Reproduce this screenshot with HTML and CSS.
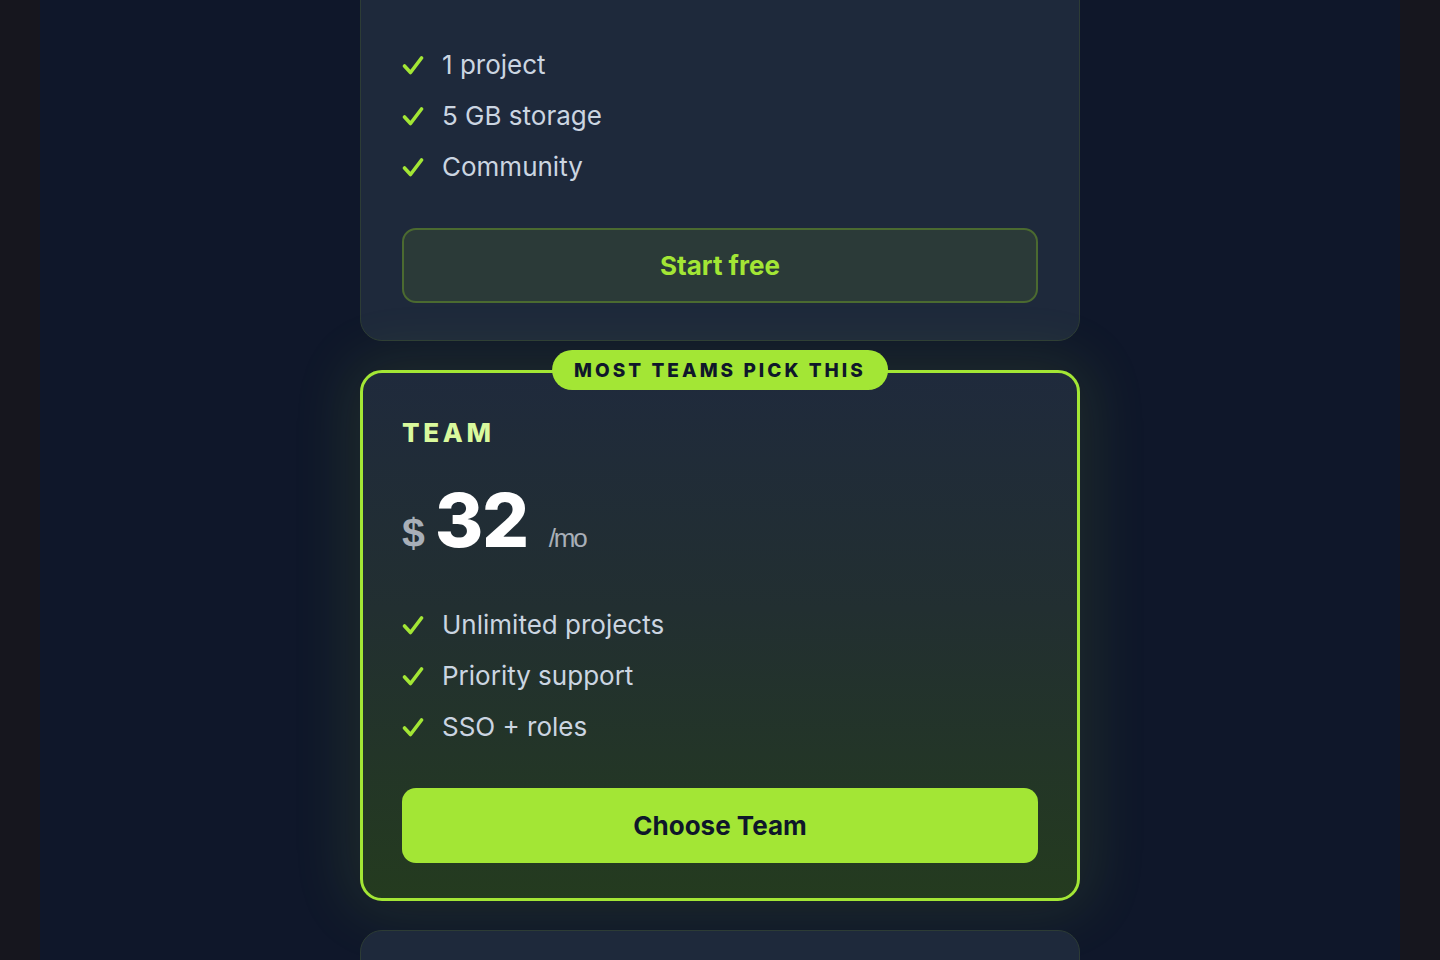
FILE: index.html
```html
<!DOCTYPE html>
<html lang="en">
<head>
<meta charset="utf-8">
<title>Pricing</title>
<link rel="stylesheet" href="styles.css">
</head>
<body>
<main class="page">
  <section class="stack">
    <article class="card card-top">
      <ul class="features">
        <li><svg class="check" viewBox="0 0 22 20"><path d="M2.5 11 L8.5 17.5 L19.5 3"/></svg>1 project</li>
        <li><svg class="check" viewBox="0 0 22 20"><path d="M2.5 11 L8.5 17.5 L19.5 3"/></svg>5 GB storage</li>
        <li><svg class="check" viewBox="0 0 22 20"><path d="M2.5 11 L8.5 17.5 L19.5 3"/></svg>Community</li>
      </ul>
      <button class="btn btn-ghost">Start free</button>
    </article>

    <article class="card card-featured">
      <span class="badge">MOST TEAMS PICK THIS</span>
      <h3 class="tier">TEAM</h3>
      <div class="price"><span class="cur">$</span><span class="amt">32</span><span class="per">/mo</span></div>
      <ul class="features">
        <li><svg class="check" viewBox="0 0 22 20"><path d="M2.5 11 L8.5 17.5 L19.5 3"/></svg>Unlimited projects</li>
        <li><svg class="check" viewBox="0 0 22 20"><path d="M2.5 11 L8.5 17.5 L19.5 3"/></svg>Priority support</li>
        <li><svg class="check" viewBox="0 0 22 20"><path d="M2.5 11 L8.5 17.5 L19.5 3"/></svg>SSO + roles</li>
      </ul>
      <button class="btn btn-solid">Choose Team</button>
    </article>

    <article class="card card-next"></article>
  </section>
</main>
</body>
</html>
```

FILE: styles.css
```css
* { box-sizing: border-box; }

html, body {
  margin: 0;
  height: 100%;
}

body {
  background: #16161e;
  font-family: Inter, "Noto Sans", sans-serif;
  overflow: hidden;
}

.page {
  margin: 0 40px;
  height: 960px;
  overflow: hidden;
  background: #0f172a;
  display: flex;
  justify-content: center;
}

.stack {
  width: 720px;
  margin-top: -60px;
  display: flex;
  flex-direction: column;
  gap: 29px;
}

.card {
  position: relative;
  flex: none;
  background: #1e293b;
  border: 1px solid #2d3c35;
  border-radius: 22px;
  padding: 41px 41px 37px;
}

.card-top {
  padding-top: 108px;
}

.card-next {
  height: 120px;
}

.card-featured {
  border: 3px solid #a3e635;
  padding: 42px 39px 35px;
  background: linear-gradient(180deg, #1f2a3c 0%, #222f31 45%, #243b1f 100%);
  box-shadow: 0 0 60px 12px rgba(163, 230, 53, 0.10);
}

.badge {
  position: absolute;
  top: -23px;
  left: 50%;
  transform: translateX(-50%);
  height: 40px;
  padding: 0 22px;
  display: flex;
  align-items: center;
  background: #a3e635;
  color: #0f172a;
  border-radius: 20px;
  font-size: 19px;
  font-weight: 800;
  letter-spacing: 0.16em;
  white-space: nowrap;
}

.tier {
  margin: 0;
  color: #d9f99d;
  font-size: 26px;
  line-height: 36px;
  font-weight: 800;
  letter-spacing: 0.14em;
}

.price {
  margin-top: 29px;
  display: flex;
  align-items: baseline;
  height: 80px;
}

.cur {
  font-family: "Liberation Sans", Arial, sans-serif;
  font-weight: 700;
  font-size: 41px;
  color: #a8afb8;
  margin-right: 10px;
}

.amt {
  font-family: Inter, sans-serif;
  font-weight: 800;
  font-size: 74px;
  letter-spacing: -0.02em;
  line-height: 80px;
  color: #ffffff;
}

.per {
  font-family: "Liberation Sans", Arial, sans-serif;
  font-size: 26px;
  letter-spacing: -0.08em;
  color: #a8afb8;
  margin-left: 21px;
}

.features {
  list-style: none;
  margin: 49px 0 0;
  padding: 0;
  display: flex;
  flex-direction: column;
  gap: 19px;
}

.card-top .features {
  margin-top: 0;
}

.features li {
  display: flex;
  align-items: center;
  color: #cbd5e1;
  font-size: 26px;
  line-height: 32px;
}

.check {
  width: 22px;
  height: 20px;
  margin-right: 18px;
  flex: none;
  fill: none;
  stroke: #a3e635;
  stroke-width: 3.6;
  stroke-linecap: round;
  stroke-linejoin: round;
}

.btn {
  display: block;
  width: 100%;
  height: 75px;
  margin-top: 45px;
  border-radius: 14px;
  font-family: Inter, sans-serif;
  font-size: 26px;
  font-weight: 700;
  cursor: pointer;
}

.btn-ghost {
  background: #2b3a38;
  border: 2px solid #4b6a30;
  color: #a3e635;
}

.btn-solid {
  background: #a3e635;
  border: none;
  color: #0f172a;
}
```
